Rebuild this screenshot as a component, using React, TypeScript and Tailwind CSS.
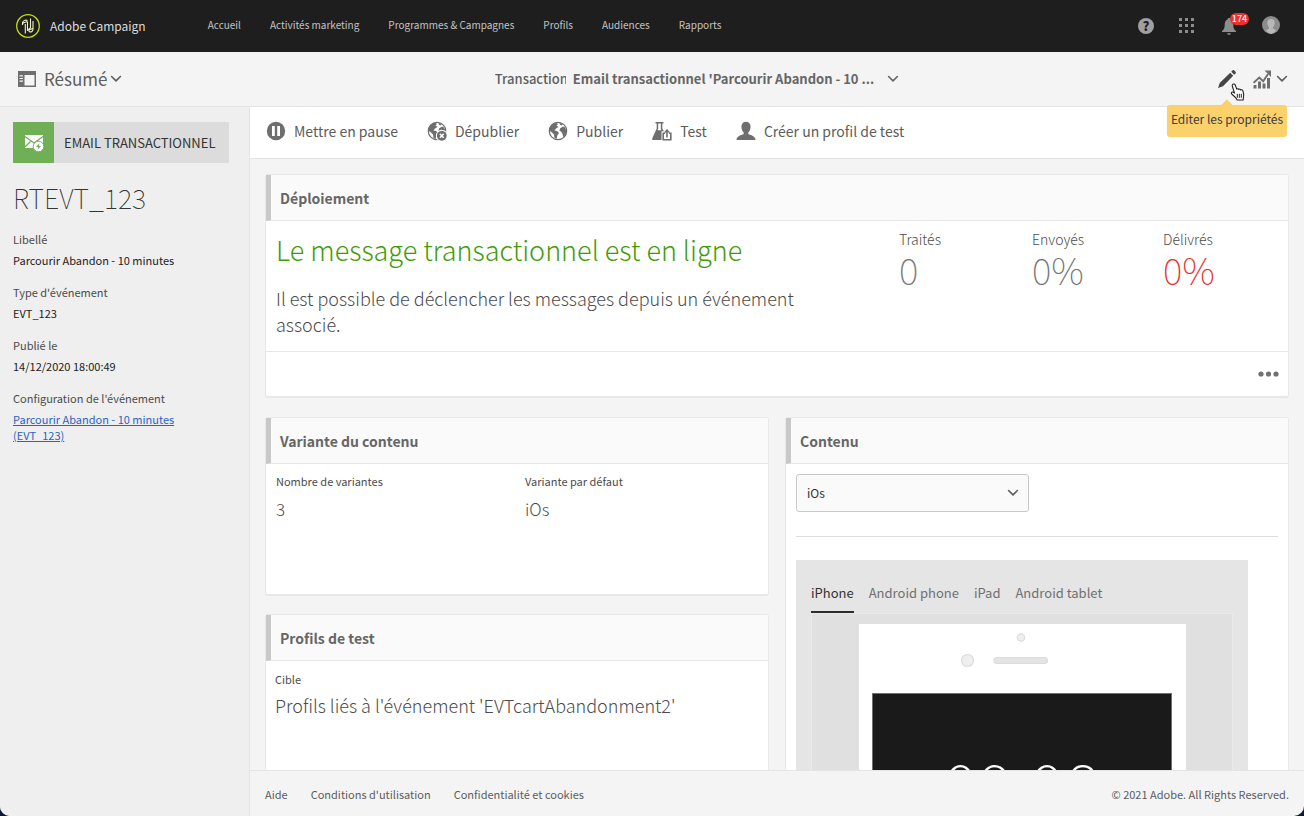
import React, { type ReactNode } from "react";

const Chevron = ({ className }: { className: string }) => (
  <svg viewBox="0 0 12 8" className={className} fill="none" stroke="currentColor" strokeWidth="1.6" strokeLinecap="round" strokeLinejoin="round" aria-hidden="true">
    <path d="M1.600 1.500 6 5.900l4.400-4.400" />
  </svg>
);

const Globe = ({ closed = false }: { closed?: boolean }) => (
  <svg viewBox="0 0 20 20" className="size-5" aria-hidden="true">
    <circle cx="10" cy="10" r="8.700" fill="#fff" stroke="#6e6e6e" strokeWidth="1.200" />
    <path d="M2 5.500 5 2.500 8 1.500 10 3 8.500 4.500 10.500 6 8 7.500 6.500 9.500 9 10 11 12 9.500 14 8.500 18 6.500 17 6 13.500 3.500 11 1.500 10zM11.500 1.800 14.500 3 13.500 4.500 12 3.800zM12 7.500 15 5.500 17 6.500 18.500 10 17.500 14 15.500 16.500 14.500 13 13.500 11 11.500 9.500z" fill="#6e6e6e" />
    {closed && (
      <>
        <circle cx="14.800" cy="14.800" r="6" fill="#fff" />
        <circle cx="14.800" cy="14.800" r="4.900" fill="#6e6e6e" />
        <path d="m12.900 12.900 3.800 3.800m0-3.800-3.800 3.800" stroke="#fff" strokeWidth="1.500" />
      </>
    )}
  </svg>
);

const PauseIcon = () => (
  <svg viewBox="0 0 20 20" className="size-5" aria-hidden="true">
    <circle cx="10" cy="10" r="9.200" fill="#6e6e6e" />
    <path d="M6 5h2.800v10H6zM11.200 5H14v10h-2.800z" fill="#fff" />
  </svg>
);

const FlaskIcon = () => (
  <svg viewBox="0 0 20 20" className="size-5" aria-hidden="true">
    <path d="M3.500 1h8v1.600h-1.200v5l1.700 3H10v8.400H1.300c-1.200 0-1.400-1-.9-1.900L4.700 7.600v-5H3.500z" fill="#6e6e6e" />
    <path d="M6.200 2.600h2.600v5.400l.6 1.200H5.400l.8-1.500z" fill="#fff" />
    <path d="M9.500 10.500h2.700L15 7.200l3 3.300h2V20H9.500z" fill="#fff" />
    <path d="M13 12.300h-1.800v6.400h7.600v-6.400H17M15 16.500v-6" fill="none" stroke="#6e6e6e" strokeWidth="1.600" />
    <path d="m15 8 3.200 3.500h-6.400z" fill="#6e6e6e" />
  </svg>
);

const PersonIcon = () => (
  <svg viewBox="0 0 20 20" className="size-5" aria-hidden="true" fill="#6e6e6e">
    <path d="M10 .8c2.900 0 4.600 2 4.600 5 0 2.600-1.100 4.600-2.300 5.800v1.500c2.800 1.200 7 2 7.200 5.900H.5c.2-3.900 4.400-4.700 7.200-5.900v-1.500C6.500 10.400 5.400 8.400 5.400 5.800c0-3 1.700-5 4.600-5z" />
  </svg>
);

const Tool = ({ icon, label }: { icon: ReactNode; label: string }) => (
  <button type="button" className="flex items-center gap-2 text-[14px] leading-5 text-[#5c5c5c]">
    {icon}
    {label}
  </button>
);

const Card = ({ title, children }: { title: string; children: ReactNode }) => (
  <section className="rounded-[3px] border border-b-2 border-[#e8e8e8] bg-white">
    <h2 className="h-[46px] border-b border-l-[5px] border-b-[#e6e6e6] border-l-[#c8c8c8] bg-[#fafafa] pl-[9px] text-[14px] leading-[46px] font-bold text-[#666]">
      {title}
    </h2>
    {children}
  </section>
);

const Info = ({ label, children }: { label: string; children: ReactNode }) => (
  <div>
    <dt className="text-[#4b4b4b]">{label}</dt>
    <dd className="mt-[5px] text-[#222]">{children}</dd>
  </div>
);

const Metric = ({ label, value, tone }: { label: string; value: string; tone: string }) => (
  <div>
    <dt className="text-[14px] leading-5 font-light text-[#4b4b4b]">{label}</dt>
    <dd className={`text-[37px] leading-10 font-thin ${tone}`}>{value}</dd>
  </div>
);

const navItems = ["Accueil", "Activités marketing", "Programmes & Campagnes", "Profils", "Audiences", "Rapports"];
const devices = ["iPhone", "Android phone", "iPad", "Android tablet"];

export default function App() {
  return (
    <div className="h-screen bg-[#0d1a30] font-['Noto_Sans_CJK_SC','Noto_Sans',sans-serif]">
      <div className="flex h-full flex-col overflow-hidden rounded-b-[10px] bg-[#f4f4f4]">
        <header className="flex h-13 shrink-0 items-center bg-[#1e1e1e] pr-6 pl-4">
          <a href="#" className="flex items-center gap-[10px] text-[12px] text-[#dcdcdc]">
            <svg viewBox="0 0 24 24" className="size-6" fill="none" aria-hidden="true">
              <circle cx="12" cy="12" r="11.300" stroke="#c6e000" strokeWidth="1.300" />
              <path d="M9.300 19.500V10M11.500 17V8M6.500 11V9c0-2 2.500-3.500 5-2.500M6.800 9.200c1.600-1.200 3.500-.8 4.700-2M14.500 4.500V14M17 7v8.500M14.500 14c-1.900.2-2.600 2.600-1 3.700 1.900.6 3.400-.6 3.500-2.200M13 16c1.400-1.100 2.700-.7 4-1.700" stroke="#f0f3c0" strokeWidth="1.100" />
            </svg>
            Adobe Campaign
          </a>
          <nav className="ml-[62px] flex gap-[29px] pb-[3px] text-[10px] text-[#c4c4c4]">
            {navItems.map((item) => (
              <a key={item} href="#">{item}</a>
            ))}
          </nav>
          <div className="ml-auto flex items-center">
            <button type="button" aria-label="Aide en ligne" className="mr-[25px] size-4 rounded-full bg-[#a0a0a0] text-center text-[13px] leading-4 font-black text-[#1e1e1e]">?</button>
            <button type="button" aria-label="Applications" className="mr-[26px]">
              <svg viewBox="0 0 16 16" className="size-4" fill="#8d8d8d" aria-hidden="true">
                <path d="M0 0h3v3H0zM6 0h3v3H6zM12 0h3v3h-3zM0 6h3v3H0zM6 6h3v3H6zM12 6h3v3h-3zM0 12h3v3H0zM6 12h3v3H6zM12 12h3v3h-3z" />
              </svg>
            </button>
            <button type="button" aria-label="Notifications" className="relative mr-[25px]">
              <svg viewBox="0 0 16 18" className="h-[18px] w-4" fill="#8d8d8d" aria-hidden="true">
                <path d="M8 1c1 0 1.500.7 1.500 1.500C11.600 3.200 12.300 5.500 12.300 8c0 3.500 1 4.500 2.700 6v1H1v-1c1.700-1.500 2.700-2.500 2.700-6 0-2.500.7-4.800 2.800-5.500C6.500 1.700 7 1 8 1zM6 16.300h4c-.3 1-1 1.500-2 1.500s-1.700-.5-2-1.500z" />
              </svg>
              <span className="absolute -top-[4px] left-[9px] w-[19px] rounded-full bg-[#ec2f2f] text-center text-[9px] leading-3 font-medium text-white">174</span>
            </button>
            <button type="button" aria-label="Compte" className="pb-[2px]">
              <svg viewBox="0 0 18 18" className="size-[18px]" aria-hidden="true">
                <circle cx="9" cy="9" r="9" fill="#8c8c8c" />
                <path d="M9 3c2.500 0 3.700 1.500 3.700 4 0 1.700-.7 3.200-1.700 4.200v1.600c1.300.5 2.500.9 3 2A9 9 0 0 1 9 18a9 9 0 0 1-5-3.200c.5-1.100 1.700-1.500 3-2v-1.600C6 10.200 5.300 8.700 5.300 7c0-2.500 1.200-4 3.700-4z" fill="#b8b8b8" />
              </svg>
            </button>
          </div>
        </header>

        <div className="grid h-[55px] shrink-0 grid-cols-[1fr_auto_1fr] items-center border-b border-[#e4e4e4] pr-4 pl-[18px] text-[#5e5e5e]">
          <button type="button" className="flex items-center gap-2 justify-self-start text-[17px] leading-6">
            <svg viewBox="0 0 18 16" className="h-4 w-[18px]" aria-hidden="true">
              <path d="M0 0h18v16H0z" fill="#6e6e6e" />
              <path d="M6.500 4h10v10.500h-10z" fill="#f5f5f5" />
              <path d="M1.500 4.800h3.500M1.500 7.500h3.500M1.500 10.200h3.500" stroke="#f5f5f5" strokeWidth="1.200" />
            </svg>
            <span className="flex items-center gap-[3px]">Résumé <Chevron className="h-2 w-3" /></span>
          </button>
          <div className="flex items-center pl-[88px] text-[13px] leading-5">
            <span className="w-[71px] overflow-hidden font-medium whitespace-nowrap">Transactionnel</span>
            <button type="button" className="ml-[7px] flex items-center gap-[13px] font-bold whitespace-nowrap text-[#666]">
              Email transactionnel 'Parcourir Abandon - 10 ...
              <Chevron className="h-2 w-3" />
            </button>
          </div>
          <div className="flex items-center gap-4 justify-self-end">
            <div className="relative flex">
              <button type="button" aria-label="Editer les propriétés" aria-describedby="edit-tip">
                <svg viewBox="0 0 20 20" className="size-5" fill="#464646" aria-hidden="true">
                  <path d="m1 19 1.700-5L13.200 3.800l3 3L6 17.300zM14.200 2.800l1.300-1.300c.6-.6 1.200-.6 1.800 0l1.200 1.200c.6.6.6 1.200 0 1.800l-1.300 1.300z" />
                </svg>
              </button>
              <span id="edit-tip" role="tooltip" className="absolute top-[36px] left-1/2 z-10 -translate-x-1/2 rounded-[3px] bg-[#fad16a] px-1 pt-[3px] pb-[7px] text-[12px] leading-[22px] whitespace-nowrap text-[#3d3d3d]">
                <span className="absolute -top-1 left-1/2 size-2 -translate-x-1/2 rotate-45 bg-[#fad16a]" />
                Editer les propriétés
              </span>
              <svg viewBox="0 0 16 18" className="absolute top-[14px] left-[13px] z-20 h-[18px] w-4" aria-hidden="true">
                <path d="M3 1.200c1-.6 1.900 0 2.200.8l1.500 4c.7-.5 1.700-.3 2 .4.800-.5 1.700-.2 2 .5.800-.4 1.800-.1 2.100.7.800 2.200 1.500 4 .7 6.400l-.3 3H7.300C6 14.500 3.500 12.500 1.700 11c-1-1.200.3-2.600 1.700-1.700l1 .6L2.300 3c-.2-.8 0-1.400.7-1.800z" fill="#fff" stroke="#222" strokeWidth="1.100" />
                <path d="M7.300 10.800v4M9.300 10.800v4M11.300 10.800v4" stroke="#222" />
              </svg>
            </div>
            <button type="button" aria-label="Rapports" className="flex items-center gap-[5px]">
              <svg viewBox="0 0 18 20" className="h-5 w-[18px]" fill="#6e6e6e" aria-hidden="true">
                <path d="M.5 16h3v3.500h-3zM5 12.500h3v7H5zM9.500 14.500h3v5h-3zM14 9h3v10.500h-3z" />
                <path d="M.6 13.800 6.300 8.500l3.900 3.800L15 5" fill="none" stroke="#6e6e6e" strokeWidth="1.900" />
                <path d="M11.500 1.500H18V8z" />
              </svg>
              <Chevron className="h-2 w-3" />
            </button>
          </div>
        </div>

        <div className="flex min-h-0 flex-1">
          <aside className="w-[250px] shrink-0 border-r border-[#e4e4e4] bg-[#efefef] py-[15px] pr-5 pl-[13px]">
            <div className="flex h-[41px] items-center bg-[#dcdcdc] text-[13px] text-[#333]">
              <span className="mr-[10px] flex size-[41px] items-center justify-center bg-[#70af55]">
                <svg viewBox="0 0 20 18" className="h-[18px] w-5" aria-hidden="true">
                  <path d="M1 1h18v13H1z" fill="#fff" />
                  <path d="m1 2.500 9 6.500 9-6.500M1 13l5.500-5.500M19 13l-5.500-5.500" stroke="#70af55" fill="none" strokeWidth="1.300" />
                  <circle cx="14.500" cy="12.500" r="5.300" fill="#fff" stroke="#70af55" />
                  <path d="m15.500 9-3.500 4h2.300L13.500 16l3.500-4h-2.300z" fill="#70af55" />
                </svg>
              </span>
              EMAIL TRANSACTIONNEL
            </div>
            <h1 className="mt-[17px] text-[27px] leading-9 font-thin text-[#333]">RTEVT_123</h1>
            <dl className="mt-[15px] flex flex-col gap-4 text-[11px] leading-4">
              <Info label="Libellé">Parcourir Abandon - 10 minutes</Info>
              <Info label="Type d'événement">EVT_123</Info>
              <Info label="Publié le">14/12/2020 18:00:49</Info>
              <Info label="Configuration de l'événement">
                <a href="#" className="block w-[180px] text-[#2a63c4] underline">Parcourir Abandon - 10 minutes (EVT_123)</a>
              </Info>
            </dl>
          </aside>

          <div className="flex min-w-0 flex-1 flex-col">
            <div className="flex h-13 shrink-0 items-center gap-[29px] border-b border-[#e4e4e4] bg-white pb-[3px] pl-4">
              <Tool icon={<PauseIcon />} label="Mettre en pause" />
              <Tool icon={<Globe closed />} label="Dépublier" />
              <Tool icon={<Globe />} label="Publier" />
              <Tool icon={<FlaskIcon />} label="Test" />
              <Tool icon={<PersonIcon />} label="Créer un profil de test" />
            </div>

            <main className="min-h-0 flex-1 overflow-hidden p-[15px]">
              <Card title="Déploiement">
                <div className="flex h-[131px] justify-between border-b border-[#e6e6e6] pt-2 pr-[71px] pl-[10px]">
                  <div className="w-[540px]">
                    <p className="text-[27px] leading-[42px] font-light text-[#3f9c07]">Le message transactionnel est en ligne</p>
                    <p className="mt-[14px] text-[18px] leading-[26px] font-light text-[#4b4b4b]">
                      Il est possible de déclencher les messages depuis un événement associé.
                    </p>
                  </div>
                  <dl className="grid grid-cols-[133px_131px_54px] content-start">
                    <Metric label="Traités" value="0" tone="text-[#757575]" />
                    <Metric label="Envoyés" value="0%" tone="text-[#757575]" />
                    <Metric label="Délivrés" value="0%" tone="text-[#e63030]" />
                  </dl>
                </div>
                <div className="flex h-11 items-center justify-end pr-[9px]">
                  <button type="button" aria-label="Plus d'actions">
                    <svg viewBox="0 0 21 6" className="h-[6px] w-[21px]" fill="#707070" aria-hidden="true">
                      <circle cx="3" cy="3" r="2.600" />
                      <circle cx="10.500" cy="3" r="2.600" />
                      <circle cx="18" cy="3" r="2.600" />
                    </svg>
                  </button>
                </div>
              </Card>

              <div className="mt-[19px] grid grid-cols-2 items-start gap-4">
                <div className="flex flex-col gap-[18px]">
                  <Card title="Variante du contenu">
                    <dl className="grid h-[130px] grid-cols-2 content-start px-[10px] pt-[9px]">
                      <div>
                        <dt className="text-[11px] leading-4 text-[#4b4b4b]">Nombre de variantes</dt>
                        <dd className="mt-[6px] text-[17px] leading-7 font-light text-[#4b4b4b]">3</dd>
                      </div>
                      <div className="pl-2">
                        <dt className="text-[11px] leading-4 text-[#4b4b4b]">Variante par défaut</dt>
                        <dd className="mt-[6px] text-[17px] leading-7 font-light text-[#4b4b4b]">iOs</dd>
                      </div>
                    </dl>
                  </Card>
                  <Card title="Profils de test">
                    <dl className="h-[160px] px-[9px] pt-[10px]">
                      <dt className="text-[11px] leading-4 text-[#4b4b4b]">Cible</dt>
                      <dd className="mt-1 text-[18px] leading-7 font-light text-[#4b4b4b]">Profils liés à l'événement 'EVTcartAbandonment2'</dd>
                    </dl>
                  </Card>
                </div>

                <Card title="Contenu">
                  <div className="px-[10px] pt-[10px] pb-4">
                    <div className="relative w-[233px]">
                      <select aria-label="Variante" className="h-[38px] w-full appearance-none rounded-[3px] border border-[#c9c9c9] bg-[#fafafa] pl-[10px] text-[12px] text-[#333]">
                        <option>iOs</option>
                      </select>
                      <Chevron className="pointer-events-none absolute top-[15px] right-[10px] h-2 w-3 text-[#5e5e5e]" />
                    </div>
                    <hr className="mt-6 mb-[23px] border-[#dedede]" />
                    <div className="mr-[30px] bg-[#e5e5e5] px-[15px] pt-5 pb-4">
                      <div role="tablist" className="flex gap-[15px] text-[13px] leading-[25px] text-[#707070]">
                        {devices.map((device, i) => (
                          <button
                            key={device}
                            type="button"
                            role="tab"
                            aria-selected={i === 0}
                            className={`border-b-2 pb-[6px] ${i === 0 ? "border-[#2c2c2c] text-[#333]" : "border-transparent"}`}
                          >
                            {device}
                          </button>
                        ))}
                      </div>
                      <div className="border border-[#eaeaea] bg-[#e0e0e0] pt-[10px]">
                        <div className="mx-auto w-[327px] bg-white pb-10">
                          <svg viewBox="0 0 327 69" className="block h-[69px] w-full" fill="#efefef" stroke="#dcdcdc" strokeWidth="1.200" aria-hidden="true">
                            <circle cx="162" cy="13.500" r="3.700" />
                            <circle cx="108.500" cy="36.500" r="6" />
                            <rect x="135" y="33.500" width="53.500" height="6" rx="3" fill="#e4e4e4" />
                          </svg>
                          <div className="ml-[13px] h-[440px] w-[300px] border border-[#707070] bg-[#1a1a1a] pt-[52px] text-center text-[68px] leading-[78px] font-thin text-white">
                            09:08
                          </div>
                        </div>
                      </div>
                    </div>
                  </div>
                </Card>
              </div>
            </main>

            <footer className="flex h-[46px] shrink-0 items-center border-t border-[#e4e4e4] px-[15px] pt-px text-[11px] text-[#5c5c5c]">
              <nav className="flex gap-[23px]">
                <a href="#">Aide</a>
                <a href="#">Conditions d'utilisation</a>
                <a href="#">Confidentialité et cookies</a>
              </nav>
              <p className="ml-auto">© 2021 Adobe. All Rights Reserved.</p>
            </footer>
          </div>
        </div>
      </div>
    </div>
  );
}
